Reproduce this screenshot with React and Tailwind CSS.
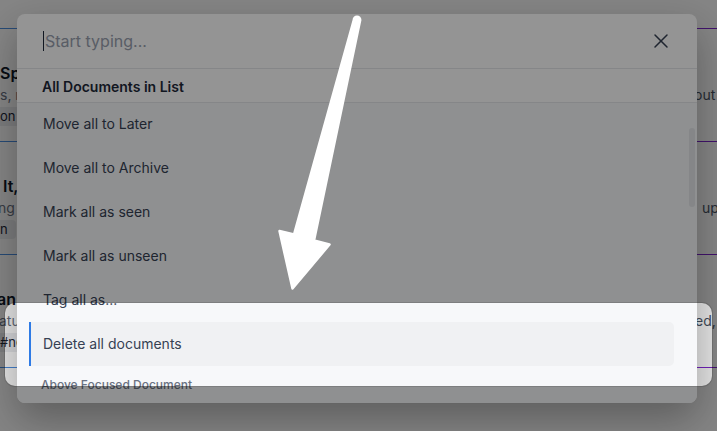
import React from "react";
import { X } from "lucide-react";

const rows = [
  { t: "Sp", tPad: "ml-0", s: "s, r", sPad: "ml-0", c: "on", right: "out", rPad: "-ml-[3px]" },
  { t: "It,", tPad: "ml-[3px]", s: "ng", sPad: "-ml-[2px]", c: "n", right: "up", rPad: "ml-[5px]" },
  { t: "an", tPad: "-ml-[3px]", s: "atu", sPad: "-ml-[1px]", c: "#ne", right: "ed,", rPad: "-ml-[2px]" },
];

const items = [
  "Move all to Later",
  "Move all to Archive",
  "Mark all as seen",
  "Mark all as unseen",
  "Tag all as...",
];

function Divider() {
  return <div className="h-px w-full bg-gradient-to-r from-[#4a90e2] to-[#7e22ce] shrink-0" />;
}

function PageRow({ r }) {
  return (
    <div className="h-[112px] grid grid-cols-[17px_1fr_20px] shrink-0">
      <div className="overflow-hidden whitespace-nowrap pt-[32px]">
        <div className={`h-[24px] leading-[24px] text-[16px] font-semibold text-gray-900 ${r.tPad}`}>{r.t}</div>
        <div className={`h-[20px] leading-[20px] text-[14px] text-gray-500 ${r.sPad}`}>{r.s}</div>
        <div className="mt-[2px] h-[19px] flex items-center -ml-[6px]">
          <span className="pl-[6px] pr-[8px] h-[19px] leading-[19px] text-[13px] text-gray-800 bg-gray-200/70 rounded-[4px]">{r.c}</span>
        </div>
      </div>
      <div />
      <div className="overflow-hidden whitespace-nowrap pt-[56px]">
        <div className={`h-[20px] leading-[20px] text-[14px] text-gray-600 ${r.rPad}`}>{r.right}</div>
      </div>
    </div>
  );
}

export default function App() {
  return (
    <div className="relative w-[717px] h-[431px] overflow-hidden bg-white font-['Inter',sans-serif]">
      {/* underlying page */}
      <div className="flex flex-col">
        <div className="h-[28px] shrink-0" />
        <Divider />
        {rows.map((r, i) => (
          <React.Fragment key={i}>
            <PageRow r={r} />
            <Divider />
          </React.Fragment>
        ))}
        <p className="pt-[59px] px-[10px] whitespace-nowrap text-[15px] leading-[24px] text-gray-700">
          this is important about it, the other thing I think is likely the same fact if you know it, what matters is that while it lasts
        </p>
      </div>

      {/* modal backdrop */}
      <div className="absolute inset-0 bg-black/10" />

      {/* modal */}
      <div className="absolute left-[17px] top-[14px] w-[680px] h-[389px] rounded-[8px] bg-white overflow-hidden flex flex-col shadow-[0_16px_40px_rgba(0,0,0,0.3)]">
        <div className="h-[55px] shrink-0 flex items-center pl-[26px] pr-[24px] border-b border-gray-200">
          <div className="w-px h-[20px] bg-gray-800" />
          <span className="text-[16px] text-gray-400 ml-px">Start typing...</span>
          <X className="ml-auto text-gray-700" size={24} strokeWidth={1.5} />
        </div>
        <div className="h-[34px] shrink-0 flex items-center pl-[25px] pt-[2px] border-b border-gray-200 text-[14px] font-semibold text-gray-800">
          All Documents in List
        </div>
        <div className="relative flex-1 bg-[#f7f8fa] overflow-hidden">
          <div className="-mt-[1px] pl-[12px] pr-[23px] flex flex-col">
            {items.map((it) => (
              <div key={it} className="h-[44px] shrink-0 flex items-center pl-[14px] pb-[2px] text-[14px] text-gray-700">
                {it}
              </div>
            ))}
            <div className="h-[44px] shrink-0 flex items-center pl-[12px] pb-[2px] text-[14px] text-gray-700 bg-[#f0f1f3] border-l-2 border-[#2f7be5] rounded-r-[5px]">
              Delete all documents
            </div>
          </div>
          <div className="pl-[24px] pt-[11px] text-[12px] leading-[16px] font-medium text-gray-500">
            Above Focused Document
          </div>
          <div className="absolute right-[2px] top-[25px] w-[6px] h-[79px] rounded-full bg-gray-200" />
        </div>
      </div>

      {/* spotlight: dims everything but a rounded window */}
      <div className="absolute left-[5px] top-[303px] w-[707px] h-[83px] rounded-[10px] shadow-[0_0_0_1px_rgba(0,0,0,0.12),0_0_0_2000px_rgba(0,0,0,0.42)]" />

      {/* annotation arrow */}
      <svg className="absolute inset-0 pointer-events-none" width="717" height="431" viewBox="0 0 717 431">
        <path
          d="M353.8 20 L294 234.5 L279.5 231 L292.5 288.5 L329.5 244.5 L314 240.5 L360.2 20 A3.2 3.2 0 0 0 353.8 20 Z"
          fill="#ffffff"
          stroke="#ffffff"
          strokeWidth="2.5"
          strokeLinejoin="round"
        />
      </svg>
    </div>
  );
}
